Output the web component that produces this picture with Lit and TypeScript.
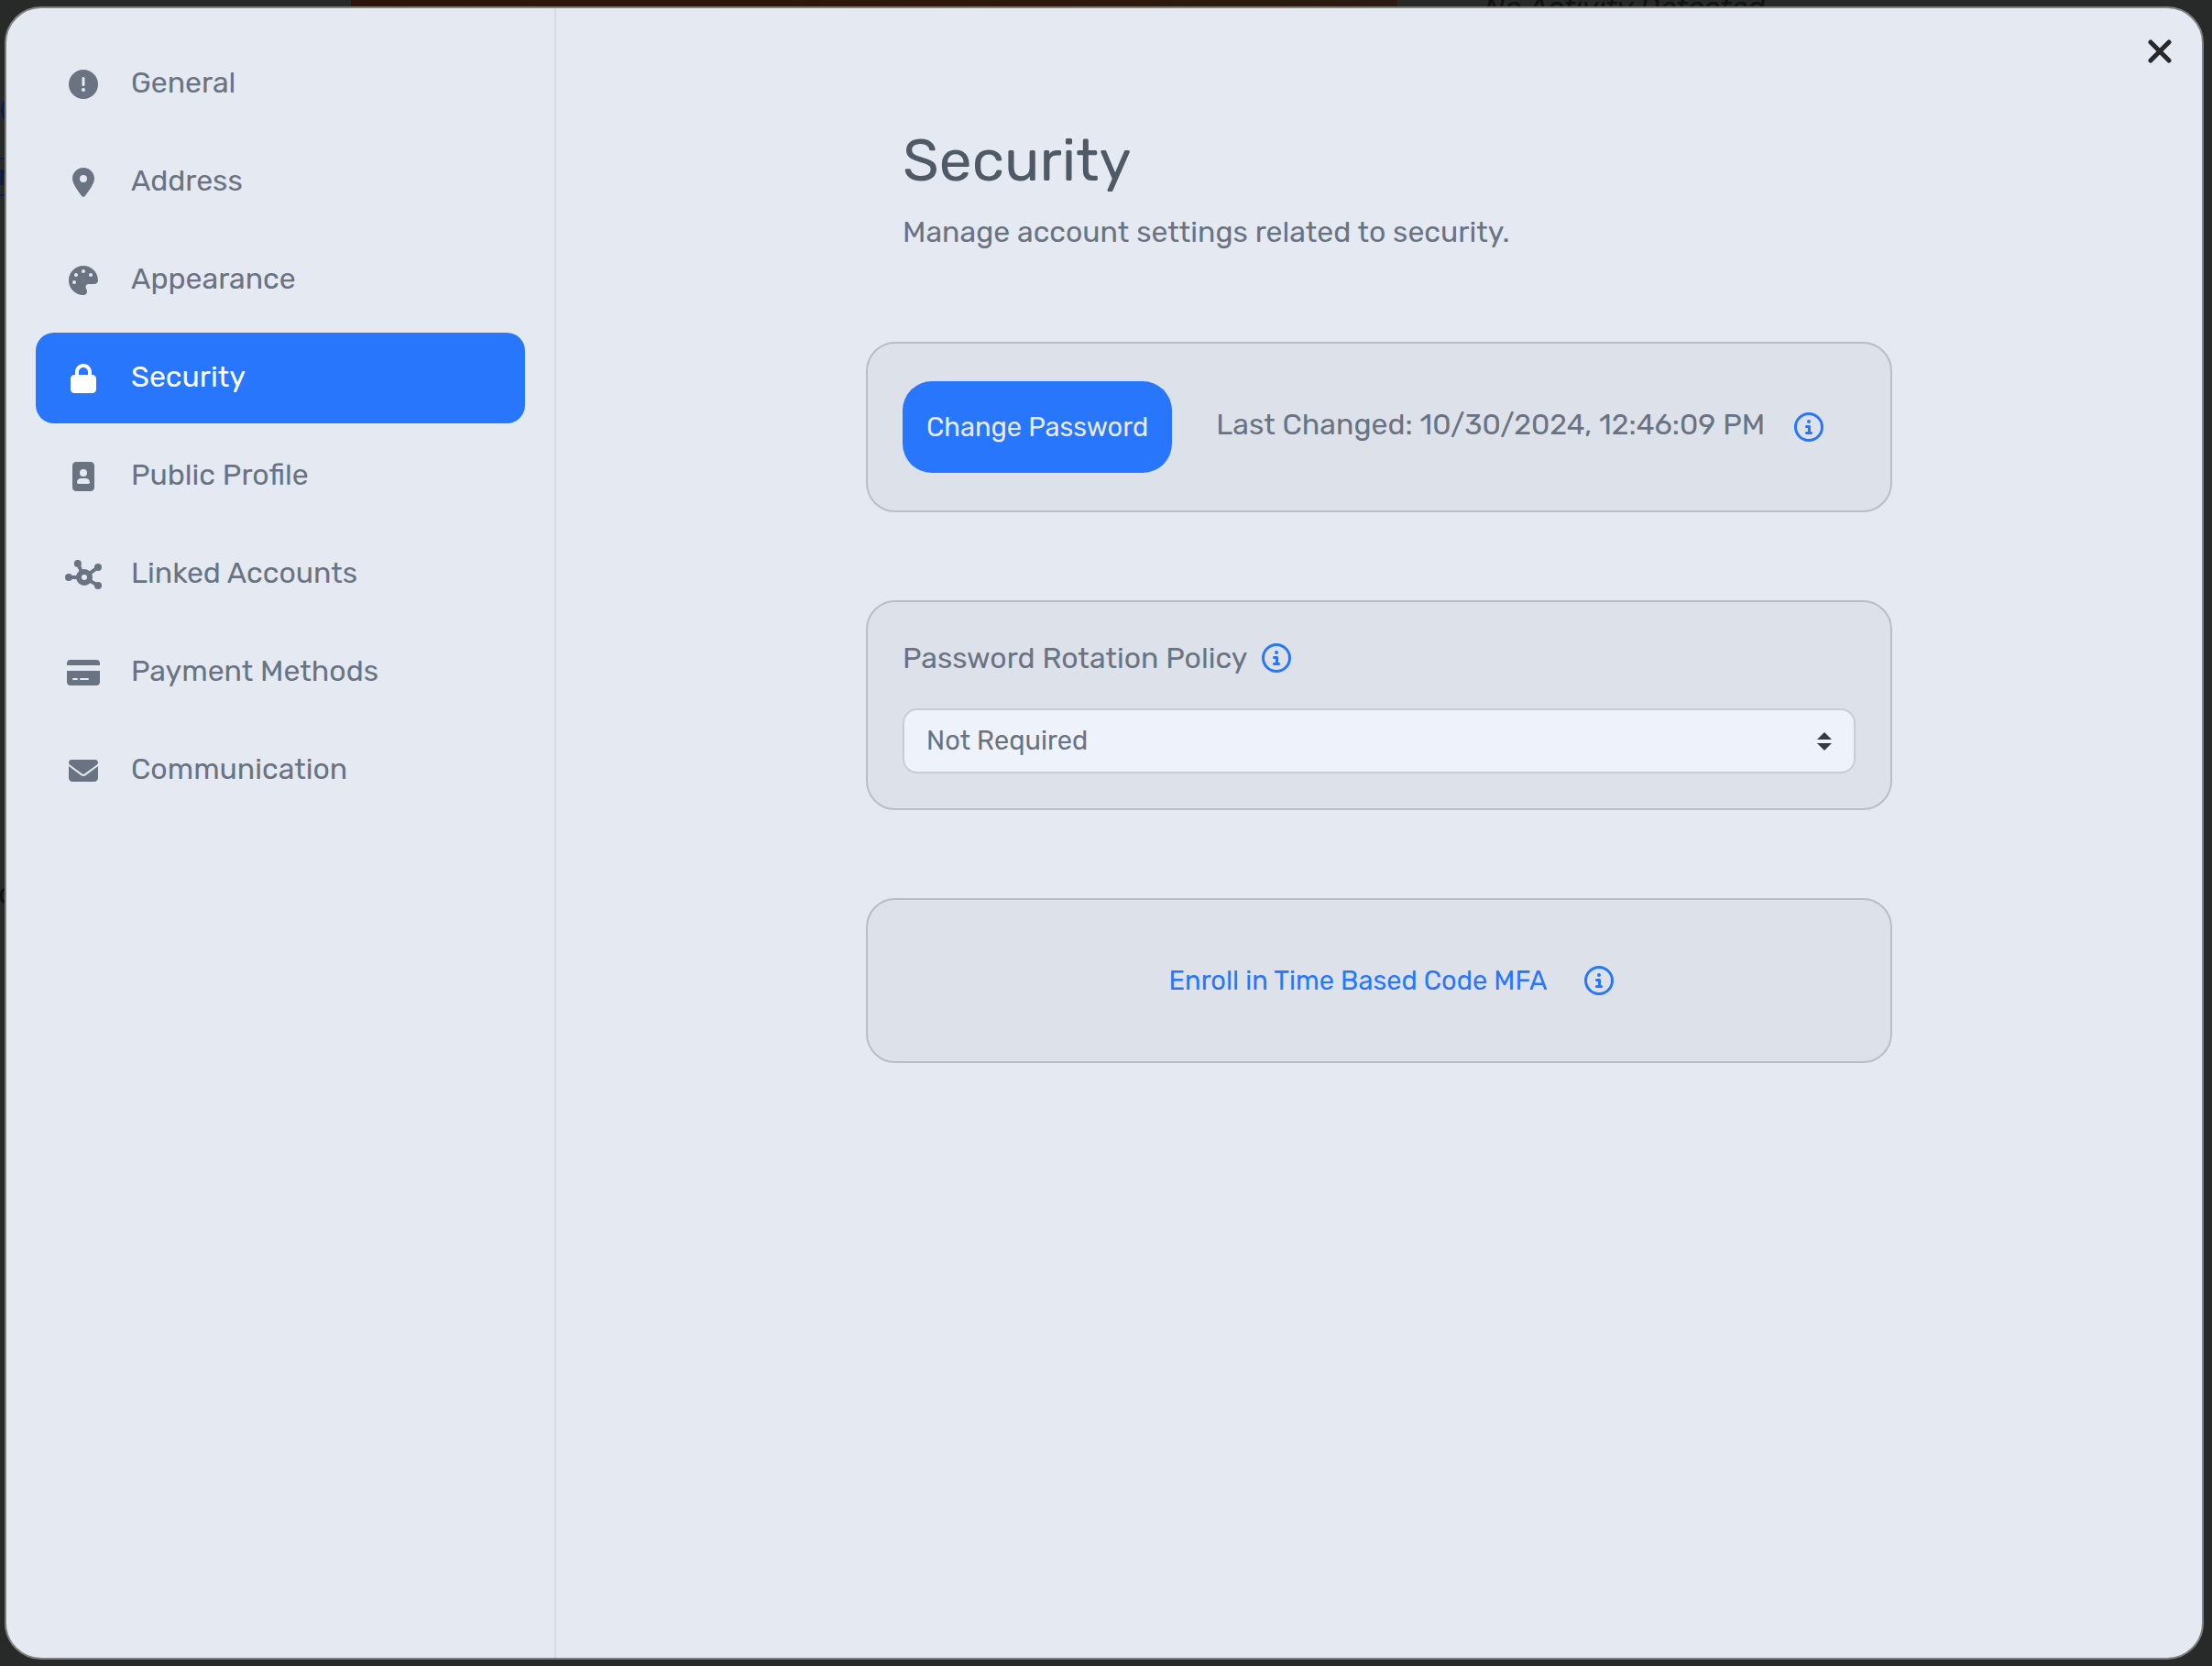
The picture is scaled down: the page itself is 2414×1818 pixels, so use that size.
import { LitElement, html, css, svg, type SVGTemplateResult } from "lit";
import { customElement, property, state } from "lit/decorators.js";
import { classMap } from "lit/directives/class-map.js";

interface Glyph {
  width: number;
  body: SVGTemplateResult;
}

const shape = (width: number, d: string): Glyph => ({
  width,
  body: svg`<path fill-rule="evenodd" d=${d}></path>`,
});

/* Every glyph is drawn on a 512 unit tall grid; 16 units make one pixel. */
const GLYPHS: Record<string, Glyph> = {
  exclamation: shape(512, "M256 512A256 256 0 1 0 256 0a256 256 0 1 0 0 512zm0-384c13.3 0 24 10.7 24 24l0 112c0 13.3-10.7 24-24 24s-24-10.7-24-24l0-112c0-13.3 10.7-24 24-24zM224 352a32 32 0 1 1 64 0 32 32 0 1 1 -64 0z"),
  pin: shape(384, "M215.7 499.2C267 435 384 279.4 384 192C384 86 298 0 192 0S0 86 0 192c0 87.4 117 243 168.3 307.2c12.3 15.3 35.1 15.3 47.4 0zM192 128a64 64 0 1 1 0 128 64 64 0 1 1 0-128z"),
  palette: shape(512, "M512 256c0 .9 0 1.8 0 2.7c-.4 36.5-33.6 61.3-70.1 61.3L344 320c-26.5 0-48 21.5-48 48c0 3.4 .4 6.7 1 9.9c2.1 10.2 6.5 20 10.8 29.9c6.1 13.8 12.1 27.5 12.1 42c0 31.8-21.6 60.7-53.4 62c-3.5 .1-7 .2-10.6 .2C114.6 512 0 397.4 0 256S114.6 0 256 0S512 114.6 512 256zM128 288a32 32 0 1 0 -64 0 32 32 0 1 0 64 0zm0-96a32 32 0 1 0 0-64 32 32 0 1 0 0 64zM288 96a32 32 0 1 0 -64 0 32 32 0 1 0 64 0zm96 96a32 32 0 1 0 0-64 32 32 0 1 0 0 64z"),
  lock: shape(448, "M144 144l0 48 160 0 0-48c0-44.2-35.8-80-80-80s-80 35.8-80 80zM80 192l0-48C80 64.5 144.5 0 224 0s144 64.5 144 144l0 48 16 0c35.3 0 64 28.7 64 64l0 192c0 35.3-28.7 64-64 64L64 512c-35.3 0-64-28.7-64-64L0 256c0-35.3 28.7-64 64-64l16 0z"),
  portrait: shape(384, "M384 64c0-35.3-28.7-64-64-64L64 0C28.7 0 0 28.7 0 64L0 448c0 35.3 28.7 64 64 64l256 0c35.3 0 64-28.7 64-64l0-384zM128 192a64 64 0 1 1 128 0 64 64 0 1 1 -128 0zM80 356.6c0-37.9 30.7-68.6 68.6-68.6l86.9 0c37.9 0 68.6 30.7 68.6 68.6c0 15.1-12.3 27.4-27.4 27.4l-169.1 0c-15.1 0-27.4-12.3-27.4-27.4z"),
  network: {
    width: 640,
    body: svg`
      <circle cx="222" cy="64" r="64"></circle>
      <circle cx="576" cy="128" r="64"></circle>
      <circle cx="64" cy="304" r="64"></circle>
      <circle cx="576" cy="448" r="64"></circle>
      <circle cx="336" cy="304" r="96" fill="none" stroke="currentColor" stroke-width="96"></circle>
      <path d="M222 64l60 128M576 128l-150 110M64 304h150M576 448l-150-90" fill="none" stroke="currentColor" stroke-width="64"></path>`,
  },
  card: shape(576, "M64 32H512a64 64 0 0 1 64 64V128H0V96A64 64 0 0 1 64 32zM0 224H576V416a64 64 0 0 1-64 64H64a64 64 0 0 1-64-64zM112 352a16 16 0 0 0 0 32H176a16 16 0 0 0 0-32zM240 352a16 16 0 0 0 0 32H368a16 16 0 0 0 0-32z"),
  envelope: shape(512, "M48 64C21.5 64 0 85.5 0 112c0 15.1 7.1 29.3 19.2 38.4L236.8 313.6c11.4 8.5 27 8.5 38.4 0L492.8 150.4c12.1-9.1 19.2-23.3 19.2-38.4c0-26.5-21.5-48-48-48L48 64zM0 176L0 384c0 35.3 28.7 64 64 64l384 0c35.3 0 64-28.7 64-64l0-208L294.4 339.2c-22.8 17.1-54 17.1-76.8 0L0 176z"),
  info: shape(512, "M256 48a208 208 0 1 1 0 416 208 208 0 1 1 0-416zm0 464A256 256 0 1 0 256 0a256 256 0 1 0 0 512zM216 336c-13.3 0-24 10.7-24 24s10.7 24 24 24l80 0c13.3 0 24-10.7 24-24s-10.7-24-24-24l-8 0 0-88c0-13.3-10.7-24-24-24l-48 0c-13.3 0-24 10.7-24 24s10.7 24 24 24l24 0 0 64-24 0zm40-144a32 32 0 1 0 0-64 32 32 0 1 0 0 64z"),
};

@customElement("ui-icon")
export class UiIcon extends LitElement {
  @property() name = "info";

  static styles = css`
    :host {
      display: inline-flex;
      flex: none;
      justify-content: center;
    }
    .glyph {
      display: block;
      height: 32px;
      fill: currentColor;
    }
  `;

  render() {
    const glyph = GLYPHS[this.name];
    return html`<svg class="glyph" viewBox="0 0 ${glyph.width} 512" width=${glyph.width / 16} aria-hidden="true">${glyph.body}</svg>`;
  }
}

const SECTIONS = [
  { label: "General", icon: "exclamation" },
  { label: "Address", icon: "pin" },
  { label: "Appearance", icon: "palette" },
  { label: "Security", icon: "lock" },
  { label: "Public Profile", icon: "portrait" },
  { label: "Linked Accounts", icon: "network" },
  { label: "Payment Methods", icon: "card" },
  { label: "Communication", icon: "envelope" },
];

@customElement("app-root")
export class AppRoot extends LitElement {
  @state() private active = "Security";

  static styles = css`
    :host {
      display: block;
      font-family: Rubik, Roboto, "Liberation Sans", sans-serif;
      font-size: 32px;
      line-height: 40px;
      color: #6a7381;
    }
    *,
    *::before,
    *::after {
      box-sizing: border-box;
    }
    button {
      font: inherit;
      color: inherit;
      border: 0;
      margin: 0;
      padding: 0;
      background: none;
      cursor: pointer;
    }

    .screen {
      position: relative;
      display: flex;
      min-height: 100vh;
      padding: 7px 9px 7px 5px;
      background: #282929;
      overflow: hidden;
    }
    .banner {
      position: absolute;
      top: 0;
      left: 383px;
      width: 1142px;
      height: 60px;
      background: linear-gradient(90deg, #2c140b, #2e190c 60%, #291c10);
    }
    .behind {
      position: absolute;
      color: #0f1115;
      white-space: nowrap;
    }
    .behind.status {
      top: -12px;
      left: 1620px;
      font-style: italic;
    }
    .behind.letter {
      top: 955px;
      left: -2px;
    }
    .behind.link {
      top: 100px;
      left: -1px;
      color: #0b1c44;
    }
    .behind.box {
      top: 172px;
      left: -40px;
      width: 80px;
      height: 42px;
      padding-left: 36px;
      border: 2px solid #0b1c44;
      line-height: 34px;
      color: #0b1c44;
    }

    .dialog {
      position: relative;
      display: flex;
      flex: 1;
      background: #e4e9f2;
      border: 2px solid #80807f;
      border-radius: 40px;
    }
    .sidebar {
      display: flex;
      flex-direction: column;
      gap: 8px;
      flex: none;
      width: 600px;
      padding: 33px 32px;
      border-right: 2px solid #d6dae3;
    }
    .tab {
      display: flex;
      align-items: center;
      gap: 32px;
      height: 99px;
      padding: 0 32px;
      border-radius: 20px;
      text-align: left;
    }
    .tab ui-icon {
      width: 40px;
    }
    .tab.active {
      background: #2776fb;
      color: #ffffff;
    }
    .tab-label {
      padding-bottom: 3px;
    }

    .content {
      flex: 1;
      min-width: 0;
      padding: 128px 40px 40px;
    }
    .column {
      display: flex;
      flex-direction: column;
      gap: 96px;
      max-width: 1120px;
      margin: 0 auto;
    }
    .heading {
      display: flex;
      flex-direction: column;
      gap: 20px;
      padding: 0 40px 4px;
    }
    .title {
      margin: 0;
      font-size: 64px;
      font-weight: 400;
      line-height: 76px;
      color: #505a66;
    }
    .subtitle {
      margin: 0;
    }

    .card {
      padding: 38px;
      background: #dde1ea;
      border: 2px solid #b9bdc7;
      border-radius: 32px;
    }
    .row {
      display: flex;
      align-items: center;
    }
    .row.password {
      min-height: 106px;
    }
    .row.field {
      gap: 16px;
      min-height: 46px;
      margin-bottom: 32px;
    }
    .row.mfa {
      justify-content: center;
      gap: 14px;
      min-height: 100px;
    }
    .primary {
      height: 100px;
      padding: 0 26px;
      margin-right: 48px;
      border-radius: 32px;
      background: #2776fb;
      color: #e8eaed;
      font-size: 29px;
    }
    .changed {
      padding-bottom: 6px;
      margin-right: 32px;
    }
    .help {
      display: inline-flex;
      color: #2776fb;
    }
    .text-button {
      padding: 0 26px;
      color: #2776fb;
      font-size: 29px;
    }
    .picker {
      position: relative;
      display: flex;
    }
    .select {
      flex: 1;
      height: 71px;
      margin: 0;
      padding: 0 24px 2px;
      appearance: none;
      background: #eef2fb;
      border: 2px solid #c8ccd6;
      border-radius: 16px;
      font: inherit;
      font-size: 29px;
      color: inherit;
    }
    .arrows {
      position: absolute;
      top: 26px;
      right: 26px;
      fill: #373a45;
      pointer-events: none;
    }
    .close {
      position: absolute;
      top: 23px;
      right: 22px;
      display: grid;
      place-items: center;
      width: 48px;
      height: 48px;
    }
    .cross {
      fill: none;
      stroke: #272829;
      stroke-width: 5;
      stroke-linecap: round;
    }
  `;

  private help(topic: string) {
    return html`<button class="help" type="button" aria-label="About ${topic}"><ui-icon name="info"></ui-icon></button>`;
  }

  render() {
    return html`
      <div class="screen">
        <div class="banner"></div>
        <span class="behind status">No Activity Detected</span>
        <span class="behind link">O</span>
        <span class="behind box">r</span>
        <span class="behind letter">o</span>

        <section class="dialog" role="dialog" aria-labelledby="title">
          <nav class="sidebar">
            ${SECTIONS.map(
              ({ label, icon }) => html`
                <button
                  type="button"
                  class=${classMap({ tab: true, active: label === this.active })}
                  @click=${() => (this.active = label)}
                >
                  <ui-icon name=${icon}></ui-icon>
                  <span class="tab-label">${label}</span>
                </button>
              `,
            )}
          </nav>

          <main class="content">
            <div class="column">
              <header class="heading">
                <h1 class="title" id="title">Security</h1>
                <p class="subtitle">Manage account settings related to security.</p>
              </header>

              <div class="card">
                <div class="row password">
                  <button class="primary" type="button">Change Password</button>
                  <span class="changed">Last Changed: 10/30/2024, 12:46:09 PM</span>
                  ${this.help("password changes")}
                </div>
              </div>

              <div class="card">
                <div class="row field">
                  <label for="rotation">Password Rotation Policy</label>
                  ${this.help("password rotation")}
                </div>
                <div class="picker">
                  <select class="select" id="rotation">
                    <option>Not Required</option>
                  </select>
                  <svg class="arrows" width="16" height="20" viewBox="0 0 16 20" aria-hidden="true">
                    <path d="M8 0l8 8H0zM0 12h16l-8 8z"></path>
                  </svg>
                </div>
              </div>

              <div class="card">
                <div class="row mfa">
                  <button class="text-button" type="button">Enroll in Time Based Code MFA</button>
                  ${this.help("time based code MFA")}
                </div>
              </div>
            </div>
          </main>

          <button class="close" type="button" aria-label="Close">
            <svg class="cross" width="26" height="26" viewBox="0 0 26 26" aria-hidden="true">
              <path d="M3 3l20 20M23 3L3 23"></path>
            </svg>
          </button>
        </section>
      </div>
    `;
  }
}
